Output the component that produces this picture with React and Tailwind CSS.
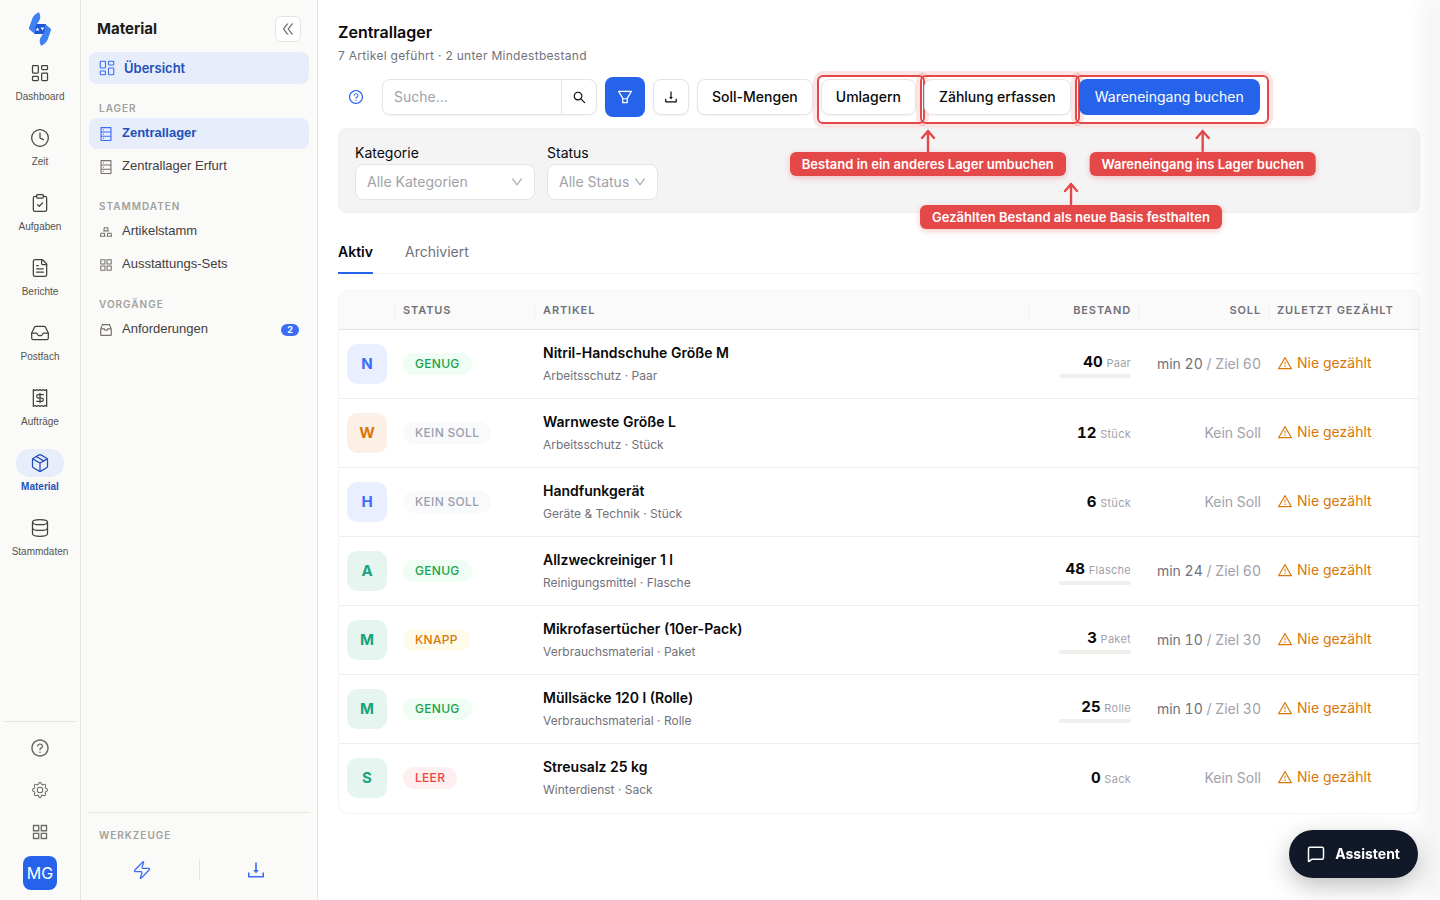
import {
  LayoutDashboard, Clock, ClipboardCheck, FileText, Inbox, Receipt, Package, Database, MessageSquare, Zap,
} from 'lucide-react';
import {
  AiOutlineAppstore, AiOutlineDatabase, AiOutlineDoubleLeft, AiOutlineDown, AiOutlineDownload,
  AiOutlineFilter, AiOutlineGold, AiOutlineInbox, AiOutlineQuestionCircle, AiOutlineSearch,
  AiOutlineWarning,
} from 'react-icons/ai';
import { BsGear } from 'react-icons/bs';

const railItems = [
  { label: 'Dashboard', icon: LayoutDashboard },
  { label: 'Zeit', icon: Clock },
  { label: 'Aufgaben', icon: ClipboardCheck },
  { label: 'Berichte', icon: FileText },
  { label: 'Postfach', icon: Inbox },
  { label: 'Aufträge', icon: Receipt },
  { label: 'Material', icon: Package, active: true },
  { label: 'Stammdaten', icon: Database },
];

const navGroups = [
  {
    title: 'Lager',
    items: [
      { label: 'Zentrallager', icon: AiOutlineDatabase, active: true },
      { label: 'Zentrallager Erfurt', icon: AiOutlineDatabase },
    ],
  },
  {
    title: 'Stammdaten',
    items: [
      { label: 'Artikelstamm', icon: AiOutlineGold },
      { label: 'Ausstattungs-Sets', icon: AiOutlineAppstore },
    ],
  },
  {
    title: 'Vorgänge',
    items: [{ label: 'Anforderungen', icon: AiOutlineInbox, count: 2 }],
  },
];

const articles = [
  { name: 'Nitril-Handschuhe Größe M', category: 'Arbeitsschutz', unit: 'Paar', status: 'genug', stock: 40, min: 20, target: 60, tone: 'blue' },
  { name: 'Warnweste Größe L', category: 'Arbeitsschutz', unit: 'Stück', status: 'none', stock: 12, tone: 'orange' },
  { name: 'Handfunkgerät', category: 'Geräte & Technik', unit: 'Stück', status: 'none', stock: 6, tone: 'blue' },
  { name: 'Allzweckreiniger 1 l', category: 'Reinigungsmittel', unit: 'Flasche', status: 'genug', stock: 48, min: 24, target: 60, tone: 'green' },
  { name: 'Mikrofasertücher (10er-Pack)', category: 'Verbrauchsmaterial', unit: 'Paket', status: 'knapp', stock: 3, min: 10, target: 30, tone: 'green' },
  { name: 'Müllsäcke 120 l (Rolle)', category: 'Verbrauchsmaterial', unit: 'Rolle', status: 'genug', stock: 25, min: 10, target: 30, tone: 'green' },
  { name: 'Streusalz 25 kg', category: 'Winterdienst', unit: 'Sack', status: 'leer', stock: 0, tone: 'green' },
];

const tones = {
  blue: 'bg-[#e9effe] text-[#3b6cf6]',
  orange: 'bg-[#fcf0e6] text-[#d97706]',
  green: 'bg-[#e6f5f0] text-[#16a37b]',
};

const statuses = {
  genug: { label: 'GENUG', style: 'bg-green-50 text-[#16a34a]' },
  none: { label: 'KEIN SOLL', style: 'bg-gray-50 text-gray-400' },
  knapp: { label: 'KNAPP', style: 'bg-amber-50 text-[#d97706]' },
  leer: { label: 'LEER', style: 'bg-[#fef0f0] text-[#ef4444]' },
};

export default function App() {
  return (
    <div className="flex min-h-screen bg-white font-['Inter',sans-serif] text-sm text-[#09090b]">
      <Rail />
      <Sidebar />
      <main className="min-w-0 flex-1 px-5 pt-5 pb-20">
        <h1 className="text-base leading-6 font-semibold">Zentrallager</h1>
        <p className="text-xs leading-6 tracking-wide text-[#71717a]">7 Artikel geführt · 2 unter Mindestbestand</p>
        <Toolbar />
        <Filters />
        <Tabs />
        <ArticleTable />
      </main>
      {/* edge shadow of the closed assistant drawer */}
      <div className="fixed inset-y-0 -right-px w-px shadow-[-6px_0_24px_6px_rgba(0,0,0,0.09)]" />
      <button className="fixed right-[22px] bottom-[22px] flex h-12 items-center gap-2.5 rounded-full bg-[#111827] px-[18px] font-bold text-white shadow-[0_8px_24px_rgba(0,0,0,0.25)]">
        <MessageSquare size={18} strokeWidth={2} />
        Assistent
      </button>
    </div>
  );
}

function Logo() {
  const blade = 'M11 .3C12.800 3.500 12.800 7 10.500 10L7.500 14 7 22 1.700 17.800C.8 17 .8 16 1.300 15L4.300 6.500C5.300 3.500 8 1.500 11 .3z';
  return (
    <svg width="24" height="34" viewBox="0 0 24 34" aria-label="Logo">
      <path d="M7.500 12h10.500l-1.500 10H6z" fill="#1a56d6" />
      <path d={blade} fill="#4080f5" />
      <path d={blade} fill="#4080f5" transform="rotate(180 12 17)" />
      <path d="M7.700 18.500l1.800-3 2 3zM16.300 15.500l-1.800 3-2-3z" fill="#fafaf9" />
    </svg>
  );
}

function Rail() {
  return (
    <aside className="flex w-[81px] shrink-0 flex-col items-center border-r border-[#e5e5e0] bg-[#fafaf9] px-1 pt-3 pb-2.5 font-['Liberation_Sans',sans-serif]">
      <Logo />
      <nav className="mt-[13px] flex w-full flex-col gap-[17px]">
        {railItems.map((item) => (
          <a key={item.label} href="#"
            className={`flex flex-col items-center text-[10px] leading-5 ${item.active ? 'font-bold text-[#2350b8]' : 'text-[#57534e]'}`}
          >
            <span className={`flex h-7 w-12 items-center justify-center rounded-full ${item.active ? 'bg-[#e7edfb]' : 'text-[#44403c]'}`}>
              <item.icon size={20} strokeWidth={1.5} />
            </span>
            {item.label}
          </a>
        ))}
      </nav>
      <div className="mt-auto flex w-full flex-col items-center border-t border-[#e5e5e0] pt-[5px] text-[#6b6b68]">
        <button aria-label="Hilfe" className="flex h-[42px] items-center"><AiOutlineQuestionCircle size={20} /></button>
        <button aria-label="Einstellungen" className="flex h-[42px] items-center"><BsGear size={16} /></button>
        <button aria-label="Apps" className="flex h-[42px] items-center"><AiOutlineAppstore size={20} /></button>
        <button className="mt-[3px] size-[34px] rounded-lg bg-[#2563eb] font-['Inter',sans-serif] text-base text-white">MG</button>
      </div>
    </aside>
  );
}

function Sidebar() {
  return (
    <aside className="flex w-[237px] shrink-0 flex-col border-r border-[#e5e5e0] bg-[#fafaf9] px-2 pt-4 pb-[18px]">
      <div className="mb-2.5 flex items-center justify-between px-2">
        <h2 className="text-[15px] leading-6 font-bold text-[#1c1c1a]">Material</h2>
        <button aria-label="Menü einklappen" className="flex size-[26px] items-center justify-center rounded-md border border-[#e5e5e0] bg-white text-[#78716c]">
          <AiOutlineDoubleLeft size={16} />
        </button>
      </div>
      <a href="#" className="flex h-8 items-center gap-2 rounded-lg bg-[#e7edfb] px-[9px] text-[13px] font-semibold text-[#2350b8]">
        <LayoutDashboard size={18} strokeWidth={1.5} className="text-[#3b6cf6]" />
        Übersicht
      </a>
      {navGroups.map((group) => (
        <div key={group.title}>
          <h3 className="h-[34px] px-2.5 pt-4 text-[10px] leading-4 font-semibold tracking-widest text-[#a1a19c] uppercase">{group.title}</h3>
          <ul className="flex flex-col gap-0.5 font-['Liberation_Sans',sans-serif]">
            {group.items.map((item) => (
              <li key={item.label}>
                <a href="#"
                  className={`flex h-[31px] items-center gap-2 rounded-lg pr-2.5 pl-[9px] text-[13px] ${item.active ? 'bg-[#e7edfb] font-bold text-[#2350b8]' : 'text-[#44403c]'}`}
                >
                  <item.icon size={16} className={item.active ? 'text-[#3b6cf6]' : 'text-[#78716c]'} />
                  {item.label}
                  {item.count && (
                    <span className="ml-auto w-[18px] rounded-full bg-[#3b6cf6] text-center font-['Inter',sans-serif] text-[9px] leading-3 font-bold text-white">{item.count}</span>
                  )}
                </a>
              </li>
            ))}
          </ul>
        </div>
      ))}
      <div className="mt-auto border-t border-[#e5e5e0] pt-3.5">
        <h3 className="px-2.5 text-[10px] leading-4 font-semibold tracking-widest text-[#a1a19c] uppercase">Werkzeuge</h3>
        <div className="-mx-1 mt-[15px] flex h-6 items-center text-[#3b6cf6]">
          <button aria-label="Schnellaktion" className="flex flex-1 justify-center"><Zap size={20} strokeWidth={1.5} /></button>
          <span className="h-5 w-px bg-[#e5e5e0]" />
          <button aria-label="Herunterladen" className="flex flex-1 justify-center"><AiOutlineDownload size={22} /></button>
        </div>
      </div>
    </aside>
  );
}

const buttonStyle = 'h-9 rounded-lg border border-[#e4e4e7] bg-white px-3.5 font-medium shadow-[0_1px_2px_rgba(0,0,0,0.05)]';

function Toolbar() {
  return (
    <div className="mt-[9px] flex h-10 items-center gap-2">
      <button aria-label="Hilfe zur Seite" className="flex size-9 items-center justify-center text-[#2563eb]">
        <AiOutlineQuestionCircle size={16} />
      </button>
      <div className="flex h-9 w-[215px] overflow-hidden rounded-lg border border-[#e4e4e7] bg-white shadow-[0_1px_2px_rgba(0,0,0,0.05)]">
        <input type="text" aria-label="Suche" placeholder="Suche..." className="min-w-0 flex-1 px-[11px] outline-none placeholder:text-[#a1a1aa]" />
        <button aria-label="Suchen" className="flex w-[35px] items-center justify-center border-l border-[#e4e4e7]">
          <AiOutlineSearch size={15} />
        </button>
      </div>
      <button aria-label="Filter" className="flex size-10 items-center justify-center rounded-lg bg-[#2563eb] text-white">
        <AiOutlineFilter size={18} />
      </button>
      <button aria-label="Exportieren" className="flex size-9 items-center justify-center rounded-lg border border-[#e4e4e7] bg-white shadow-[0_1px_2px_rgba(0,0,0,0.05)]">
        <AiOutlineDownload size={16} />
      </button>
      <button className={buttonStyle}>Soll-Mengen</button>
      <Hint text="Bestand in ein anderes Lager umbuchen" place="top-[50px] left-[107px]">
        <button className={buttonStyle}>Umlagern</button>
      </Hint>
      <Hint text="Gezählten Bestand als neue Basis festhalten" place="top-[103px] left-[147px]">
        <button className={buttonStyle}>Zählung erfassen</button>
      </Hint>
      <Hint text="Wareneingang ins Lager buchen" place="top-[50px] left-[124px]">
        <button className="h-9 rounded-lg bg-[#2563eb] px-4 text-white">Wareneingang buchen</button>
      </Hint>
    </div>
  );
}

// red frame round a button, with a callout that points up at it
function Hint({ text, place, children }) {
  return (
    <div className="relative flex">
      {children}
      <div className="pointer-events-none absolute -top-1 -right-[9px] -bottom-[9px] -left-1 rounded-md border-2 border-[#e54848] shadow-[0_0_0_4px_rgba(229,72,72,0.14)]" />
      <div className={`pointer-events-none absolute z-10 flex -translate-x-1/2 flex-col items-center ${place}`}>
        <svg width="16" height="23" viewBox="0 0 16 23" fill="none" stroke="#e54848" strokeWidth="2.400" strokeLinecap="round" strokeLinejoin="round">
          <path d="M8 22V2M2 9l6-7 6 7" />
        </svg>
        <span className="rounded-md bg-[#e54848] px-3 text-[13px] leading-6 font-semibold whitespace-nowrap text-white shadow-[0_2px_6px_rgba(229,72,72,0.3)]">{text}</span>
      </div>
    </div>
  );
}

function Filters() {
  return (
    <div className="mt-[11px] flex gap-3 rounded-lg border border-[#f0f0f0] bg-[#f4f4f5] px-4 pt-3.5 pb-3">
      <FilterSelect id="kategorie" label="Kategorie" placeholder="Alle Kategorien" width="w-[180px]" />
      <FilterSelect id="status" label="Status" placeholder="Alle Status" width="w-[111px]" />
    </div>
  );
}

function FilterSelect({ id, label, placeholder, width }) {
  return (
    <div className={width}>
      <label htmlFor={id} className="mb-px block leading-5">{label}</label>
      <div className="relative">
        <select id={id} className="block h-9 w-full appearance-none rounded-lg border border-[#e4e4e7] bg-white pl-[11px] text-[#a1a1aa]">
          <option>{placeholder}</option>
        </select>
        <AiOutlineDown size={14} className="pointer-events-none absolute top-[11px] right-[11px] text-[#a1a1aa]" />
      </div>
    </div>
  );
}

function Tabs() {
  return (
    <div className="mt-[15px] flex gap-8 border-b border-[#f4f4f5]">
      <button className="-mb-px h-[46px] border-b-2 border-[#2563eb] pt-1 font-semibold">Aktiv</button>
      <button className="-mb-px h-[46px] border-b-2 border-transparent pt-1 text-[#71717a]">Archiviert</button>
    </div>
  );
}

function ArticleTable() {
  const head = 'relative h-[39px] border-b border-[#e4e4e7] px-2 pt-0.5 text-[11px] font-semibold tracking-[0.08em] text-[#71717a] uppercase';
  const line = <span className="absolute top-3 right-0 h-[17px] w-px bg-[#efeff4]" />;
  return (
    <div className="mt-4 overflow-hidden rounded-[10px] border border-[#f4f4f5]">
      <table className="w-full table-fixed border-separate border-spacing-0">
        <colgroup>
          <col className="w-14" />
          <col className="w-[140px]" />
          <col />
          <col className="w-[110px]" />
          <col className="w-[130px]" />
          <col className="w-[150px]" />
        </colgroup>
        <thead className="bg-[#fafafa]">
          <tr>
            <th className={head}>{line}</th>
            <th className={`${head} text-left`}>Status{line}</th>
            <th className={`${head} text-left`}>Artikel{line}</th>
            <th className={`${head} text-right`}>Bestand{line}</th>
            <th className={`${head} text-right`}>Soll{line}</th>
            <th className={`${head} text-left`}>Zuletzt gezählt</th>
          </tr>
        </thead>
        <tbody>
          {articles.map((article) => <ArticleRow key={article.name} article={article} />)}
        </tbody>
      </table>
    </div>
  );
}

function ArticleRow({ article }) {
  const status = statuses[article.status];
  return (
    <tr className="*:h-[69px] *:border-b *:border-[#efeff1] *:px-2 last:*:border-transparent">
      <td>
        <span className={`flex size-10 items-center justify-center rounded-[10px] text-[15px] font-bold ${tones[article.tone]}`}>
          {article.name[0]}
        </span>
      </td>
      <td>
        <span className={`inline-block rounded-full px-3 text-xs leading-[22px] font-medium tracking-wide ${status.style}`}>{status.label}</span>
      </td>
      <td>
        <div className="leading-6 font-semibold">{article.name}</div>
        <div className="text-xs leading-[22px] text-[#71717a]">{article.category} · {article.unit}</div>
      </td>
      <td className="text-right tabular-nums">
        <div className="leading-[22px]">
          <span className="text-[15px] font-bold">{article.stock}</span>{' '}
          <span className="text-[11px] tracking-wide text-[#a1a1aa]">{article.unit}</span>
        </div>
        {article.min && <div className="ml-auto h-1 w-[72px] rounded-full bg-[#f0efeb]" />}
      </td>
      <td className="text-right text-[#a1a1aa] tabular-nums">
        {article.min
          ? <><span className="text-[#71717a]">min {article.min}</span> / Ziel {article.target}</>
          : 'Kein Soll'}
      </td>
      <td>
        <span className="flex items-center gap-1 pb-0.5 text-[#d97706]">
          <AiOutlineWarning size={16} />
          Nie gezählt
        </span>
      </td>
    </tr>
  );
}
